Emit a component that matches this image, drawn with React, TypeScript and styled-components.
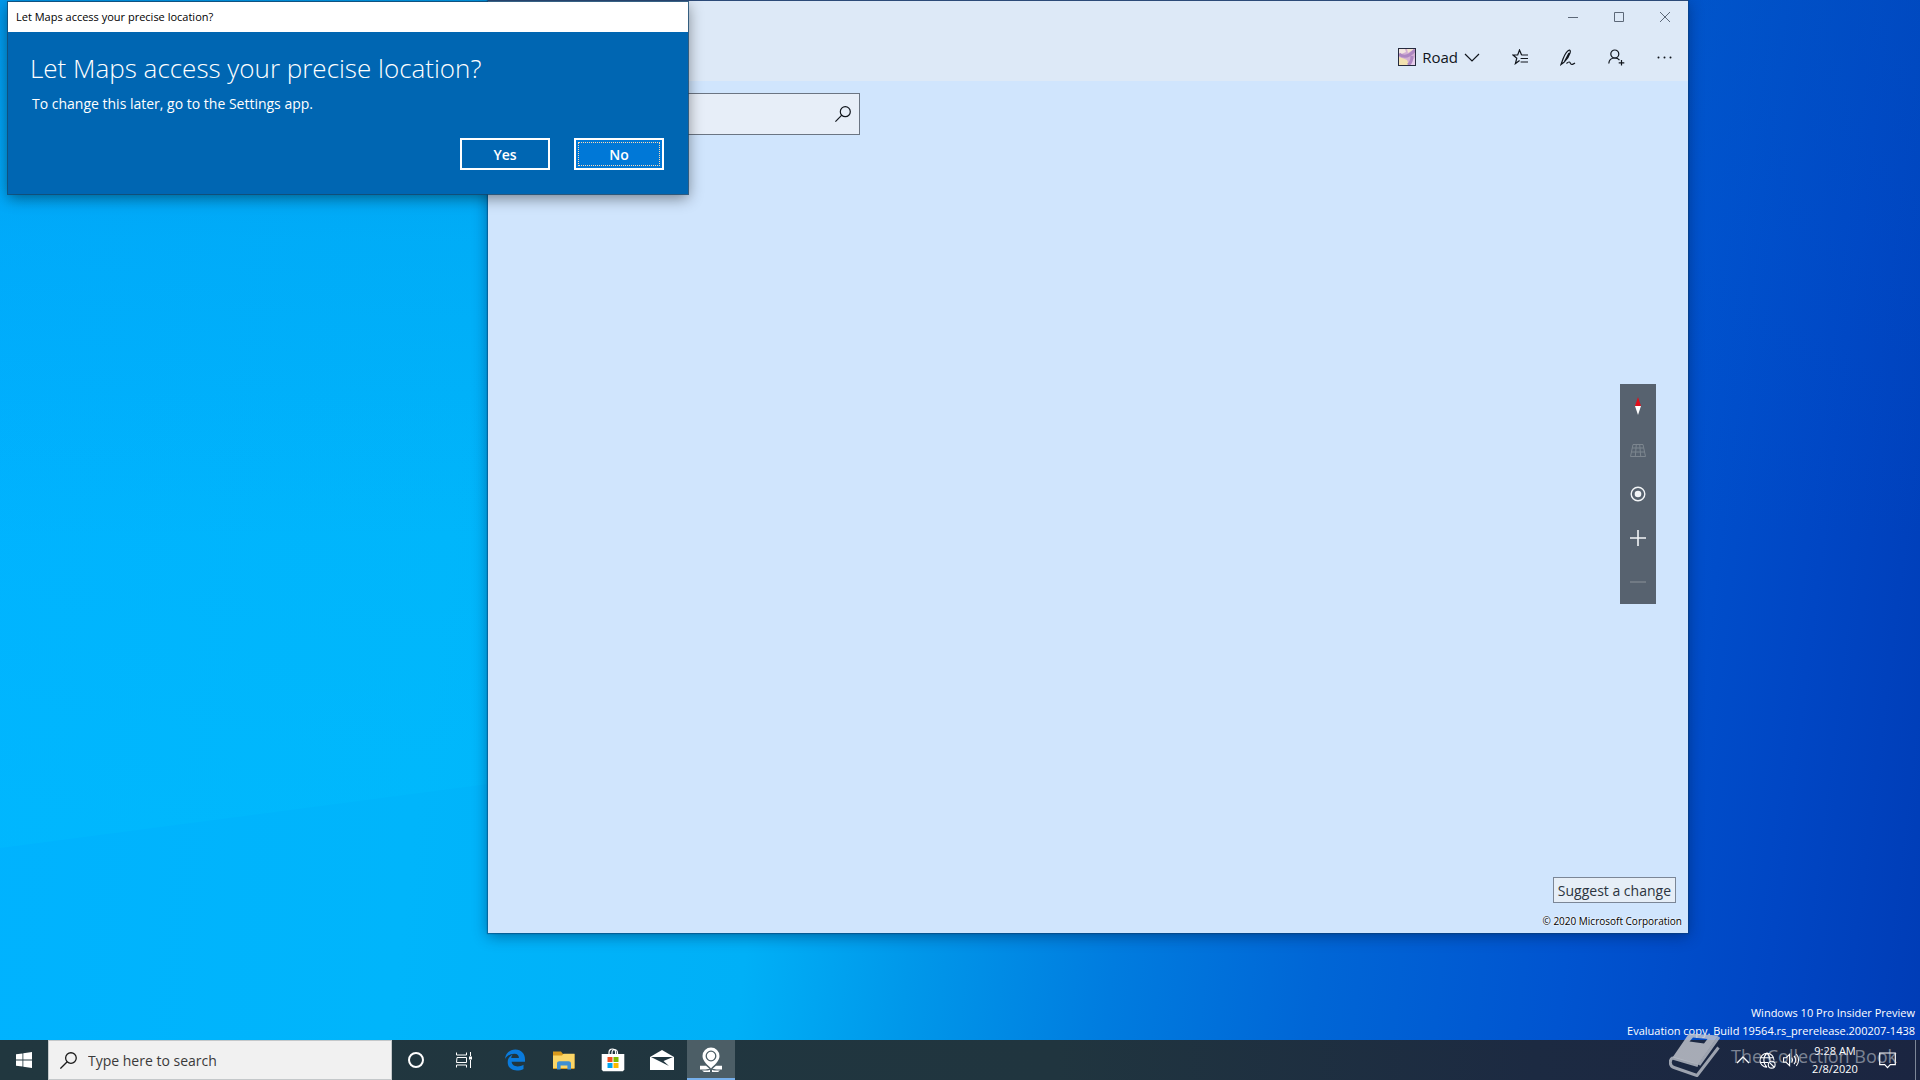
import React from "react";
import styled, { createGlobalStyle } from "styled-components";

const GlobalStyle = createGlobalStyle`
  *, *::before, *::after { box-sizing: border-box; }
  html, body { margin: 0; padding: 0; }
  body { overflow: hidden; }
  body, button, input {
    font-family: "Open Sans", "Noto Sans", sans-serif;
  }
  button { border: 0; padding: 0; background: none; color: inherit; cursor: default; }
  h1, p { margin: 0; font-weight: 400; }
  svg { display: block; flex: none; }
`;

/* ---------- Desktop ---------- */

const Desktop = styled.div`
  position: relative;
  display: flex;
  flex-direction: column;
  min-height: 100vh;
  overflow: hidden;
  background:
    linear-gradient(to bottom, rgba(0, 88, 190, 0.28), rgba(0, 100, 210, 0.1) 22%, rgba(0, 110, 230, 0) 50%),
    linear-gradient(
      97deg,
      #00b2ff 0%,
      #00b5fb 25%,
      #00b0f7 42%,
      #0098ea 50%,
      #007cdf 60%,
      #0066d6 70%,
      #0054d0 82%,
      #0046c4 92%,
      #003cb6 100%
    );
`;

const Beams = styled.svg`
  position: absolute;
  inset: 0;
  width: 100%;
  height: 100%;
`;

const Workspace = styled.main`
  position: relative;
  flex: 1;
  display: flex;
  align-items: flex-end;
  justify-content: flex-end;
`;

const BuildNotice = styled.div`
  padding: 0 5px 0 0;
  color: #fff;
  font-size: 11px;
  line-height: 18px;
  text-align: right;
  white-space: nowrap;
`;

/* ---------- Maps window ---------- */

const MapsWindow = styled.section`
  position: absolute;
  top: 0;
  left: 488px;
  right: 232px;
  bottom: 107px;
  display: flex;
  flex-direction: column;
  border-top: 1px solid #2b4a78;
  background: #d0e5fd;
  box-shadow: 0 0 1px 1px rgba(10, 60, 110, 0.5), 0 3px 14px rgba(0, 20, 60, 0.45);
`;

const MapsHeader = styled.header`
  background: #dde9f7;
`;

const CaptionBar = styled.div`
  display: flex;
  justify-content: flex-end;
  height: 32px;
  color: #5c6878;
`;

const CaptionButton = styled.button`
  display: grid;
  place-items: center;
  width: 46px;
  height: 32px;
`;

const Toolbar = styled.div`
  display: flex;
  justify-content: flex-end;
  height: 48px;
  color: #10151c;
`;

const ToolButton = styled.button`
  display: grid;
  place-items: center;
  width: 48px;
  height: 48px;
`;

const ViewButton = styled.button`
  display: flex;
  align-items: center;
  gap: 6px;
  padding: 0 16px;
  font-size: 15px;
`;

const MapArea = styled.div`
  flex: 1;
  display: flex;
  flex-direction: column;
  justify-content: space-between;
  padding: 12px 12px 4px;
`;

const MapSearch = styled.label`
  display: flex;
  align-items: center;
  width: 360px;
  height: 42px;
  padding: 0 8px;
  border: 1px solid #6b7583;
  background: #e7eef8;
  color: #10151c;
`;

const MapSearchInput = styled.input`
  flex: 1;
  min-width: 0;
  border: 0;
  outline: 0;
  background: transparent;
  font-size: 15px;
`;

const MapControls = styled.div`
  align-self: flex-end;
  display: flex;
  flex-direction: column;
  width: 36px;
  margin: 0 20px 24px 0;
  background: #57626f;
`;

const MapControl = styled.button<{ $dim?: boolean }>`
  display: grid;
  place-items: center;
  height: 44px;
  color: ${(p) => (p.$dim ? "#7d868f" : "#f3f5f7")};
`;

const MapFooter = styled.footer`
  display: flex;
  flex-direction: column;
  align-items: flex-end;
  gap: 10px;
`;

const SuggestButton = styled.button`
  height: 26px;
  padding: 0 4px;
  border: 1px solid #7b8696;
  background: #e6eef7;
  color: #2c3440;
  font-size: 14px;
`;

const Copyright = styled.p`
  margin-right: -6px;
  color: #000;
  font-size: 10px;
  line-height: 16px;
  text-shadow: 0 0 2px #fff, 0 0 2px #fff;
`;

/* ---------- Consent dialog ---------- */

const Dialog = styled.section`
  position: absolute;
  top: 2px;
  left: 8px;
  width: 680px;
  background: #0066b2;
  color: #fff;
  box-shadow: 0 0 0 1px rgba(20, 70, 110, 0.8), 0 4px 14px rgba(0, 0, 0, 0.45);
`;

const DialogCaption = styled.div`
  height: 30px;
  padding: 0 8px;
  background: #fff;
  color: #000;
  font-size: 11px;
  line-height: 30px;
`;

const DialogBody = styled.div`
  padding: 16px 24px 24px 22px;
`;

const DialogTitle = styled.h1`
  font-size: 26px;
  font-weight: 300;
  line-height: 40px;
`;

const DialogText = styled.p`
  padding-left: 2px;
  font-size: 14px;
  line-height: 32px;
`;

const DialogActions = styled.div`
  display: flex;
  justify-content: flex-end;
  gap: 24px;
  padding-top: 18px;
`;

const DialogButton = styled.button<{ $focused?: boolean }>`
  width: 90px;
  height: 32px;
  padding: 2px;
  border: 2px solid #fff;
  background: ${(p) => (p.$focused ? "#0078d7" : "transparent")};
  font-size: 14px;
  font-weight: 600;
`;

const FocusRing = styled.span<{ $on?: boolean }>`
  display: grid;
  place-items: center;
  height: 24px;
  border: 1px dotted ${(p) => (p.$on ? "#ffd9b0" : "transparent")};
`;

/* ---------- Taskbar ---------- */

const Taskbar = styled.nav`
  position: relative;
  display: flex;
  height: 40px;
  background: linear-gradient(to right, #21373f, #20353f 55%, #1c2a42 80%, #1b2541);
  color: #fff;
`;

const StartButton = styled.button`
  display: grid;
  place-items: center;
  width: 48px;
`;

const TaskSearch = styled.label`
  display: flex;
  align-items: center;
  gap: 11px;
  width: 344px;
  padding: 0 11px;
  border: 1px solid #c4c8ca;
  background: #f1f1f1;
  color: #1a1a1a;
`;

const TaskSearchInput = styled.input`
  flex: 1;
  min-width: 0;
  padding: 0;
  border: 0;
  outline: 0;
  background: transparent;
  font-size: 14px;
  &::placeholder { color: #3a3a3a; opacity: 1; }
`;

const TaskGroup = styled.div`
  display: flex;
`;

const AppGroup = styled.div`
  display: flex;
  gap: 1px;
  padding-left: 3px;
`;

const TaskButton = styled.button<{ $active?: boolean }>`
  display: grid;
  place-items: center;
  width: 48px;
  background: ${(p) => (p.$active ? "#4c5e66" : "transparent")};
  box-shadow: ${(p) => (p.$active ? "inset 0 -2px 0 #76b0ec" : "none")};
`;

const Tray = styled.div`
  display: flex;
  align-items: center;
  margin-left: auto;
`;

const TrayButton = styled.button`
  display: grid;
  place-items: center;
  width: 24px;
  height: 40px;
`;

const Clock = styled.button`
  width: 64px;
  height: 40px;
  font-size: 11px;
  line-height: 18px;
  text-align: center;
`;

const ActionCenter = styled.button`
  display: grid;
  place-items: center;
  width: 40px;
  height: 40px;
  margin-right: 8px;
`;

const ShowDesktop = styled.button`
  width: 5px;
  height: 40px;
  border-left: 1px solid #7d8798;
`;

const Watermark = styled.div`
  position: absolute;
  right: 23px;
  bottom: 0;
  display: flex;
  align-items: center;
  gap: 10px;
  height: 48px;
  color: rgba(222, 224, 230, 0.5);
  font-size: 18px;
  white-space: nowrap;
  pointer-events: none;
`;

/* ---------- Icons ---------- */

const line = { fill: "none", stroke: "currentColor" } as const;

const SearchIcon = ({ size }: { size: number }) => (
  <svg width={size} height={size} viewBox="0 0 16 16" {...line} strokeWidth="1.2">
    <circle cx="10.3" cy="5.7" r="5" />
    <path d="M6.8 9.2.4 15.6" />
  </svg>
);

const RoadSwatch = () => (
  <svg width="18" height="18" viewBox="0 0 18 18">
    <rect width="18" height="18" fill="#d3b0d4" />
    <path d="M1 1h6l1 3-7 3z" fill="#f3e6e0" />
    <path d="M1 9c3 1 6 2 8 3l2 5H1z" fill="#f3e2b0" />
    <path d="M17 9v8h-4l1-4z" fill="#e6ccea" />
    <path d="M9 1h7l-6 4z" fill="#f4e3cf" />
    <path d="M1 6c5 4 10 3 16-4M10 17c3-2 4-5 4-9" stroke="#ae87c2" strokeWidth="3" fill="none" />
    <rect x=".5" y=".5" width="17" height="17" fill="none" stroke="#252a3d" />
  </svg>
);

const ChevronDown = () => (
  <svg width="16" height="9" viewBox="0 0 16 9" {...line} strokeWidth="1.2">
    <path d="M1 1l7 7 7-7" />
  </svg>
);

const FavoritesIcon = () => (
  <svg width="17" height="16" viewBox="0 0 17 16" {...line} strokeWidth="1.2">
    <path d="M9.6 6 7.5 1 5.7 6H1l3.8 3.2L3.4 14.6 7.6 11.4M9.6 6H16M8.6 9.5H16M8.6 13H16" />
  </svg>
);

const InkIcon = () => (
  <svg width="16" height="17" viewBox="0 0 16 17" {...line} strokeWidth="1.2">
    <path d="M1 15.5 3 10C4.500 6 7 2 9 1.200c1.500-.4 1.500 1.300 1 2.800C9 7.500 6.500 11 4 13.300zM4.500 12.500 9 4M1 15.500 4 13.300M6.500 14.500c2.500-2.500 3.500-1.500 4 0 1 1.500 2.500 1 4.500-.5" />
  </svg>
);

const AddPersonIcon = () => (
  <svg width="17" height="17" viewBox="0 0 17 17" {...line} strokeWidth="1.2">
    <circle cx="6.800" cy="5" r="4" />
    <path d="M.8 14.500C1 11 3.500 9 6.800 9c2 0 3.700.8 4.700 2.200M13.500 11v5.600M10.700 13.800h5.600" />
  </svg>
);

const MoreIcon = () => (
  <svg width="15" height="3" viewBox="0 0 15 3" fill="currentColor">
    <circle cx="1.500" cy="1.500" r="1" />
    <circle cx="7.500" cy="1.500" r="1" />
    <circle cx="13.500" cy="1.500" r="1" />
  </svg>
);

const CompassIcon = () => (
  <svg width="8" height="18" viewBox="0 0 8 18">
    <path d="M4 0l3 9H1z" fill="#e0101c" />
    <path d="M1 9h6l-3 9z" fill="#fff" />
  </svg>
);

const TiltIcon = () => (
  <svg width="16" height="13" viewBox="0 0 16 13" {...line}>
    <path d="M3 .5h10l2.500 12H.5zM2.200 4h11.600M1.400 8h13.200M6.300.5l-1 12M9.700.5l1 12" />
  </svg>
);

const LocateIcon = () => (
  <svg width="16" height="16" viewBox="0 0 16 16" {...line} strokeWidth="1.400">
    <circle cx="8" cy="8" r="6.800" />
    <circle cx="8" cy="8" r="3.300" fill="currentColor" stroke="none" />
  </svg>
);

const PlusIcon = () => (
  <svg width="16" height="16" viewBox="0 0 16 16" {...line} strokeWidth="1.600">
    <path d="M8 0v16M0 8h16" />
  </svg>
);

const MinusIcon = () => (
  <svg width="16" height="2" viewBox="0 0 16 2" {...line} strokeWidth="1.400">
    <path d="M0 1h16" />
  </svg>
);

const WindowsIcon = () => (
  <svg width="16" height="16" viewBox="0 0 16 16" fill="#fff">
    <path d="M0 2.300 6.500 1.400v6.200H0zM7.300 1.300 16 0v7.600H7.300zM0 8.400h6.500v6.200L0 13.700zM7.300 8.400H16V16l-8.700-1.300z" />
  </svg>
);

const CortanaIcon = () => (
  <svg width="18" height="18" viewBox="0 0 18 18" {...line} strokeWidth="2">
    <circle cx="9" cy="9" r="7" />
  </svg>
);

const TaskViewIcon = () => (
  <svg width="17" height="16" viewBox="0 0 17 16" {...line}>
    <path d="M.5.500v2.500h10V.5M.5 15.500V13h10v2.500M1 5.500h9.500v5H.5zM14.500 0v4M14.500 8v8" />
    <rect x="13" y="4.500" width="3" height="3" fill="currentColor" stroke="none" />
  </svg>
);

const EdgeIcon = () => (
  <svg width="22" height="22" viewBox="0 0 22 22" fill="#0a7bdc">
    <path d="M1 10C1.600 4.400 5.600.5 11.400.5c6 0 9.600 4.500 9.600 9.800v2.500H7.600c.3 3.200 2.900 4.600 6 4.600 2.200 0 4.200-.7 5.900-1.700v4.300c-1.900 1-4.200 1.500-6.600 1.500-5.400 0-9.200-3.200-9.200-8.300 0-3.500 1.900-6.400 5.200-7.800-1.100 1.100-1.500 2.400-1.700 3.600h7.700c0-2.500-1.300-4.300-4.600-4.300C6.500 4.700 3.200 6.700 1 10z" />
  </svg>
);

const FolderIcon = () => (
  <svg width="22" height="19" viewBox="0 0 22 19">
    <path d="M0 .5h8l2 2.500h11.500v15H0z" fill="#d99a1c" />
    <path d="M0 4.500h9l1.500-1.700H21.500V17H0z" fill="#fbd667" />
    <path d="M4 18.500v-6c0-1.400 1-2.300 2.400-2.300h9.200c1.400 0 2.400.9 2.400 2.300v6h-3.600v-4H7.600v4z" fill="#3f8fd2" />
  </svg>
);

const StoreIcon = () => (
  <svg width="24" height="24" viewBox="0 0 24 24">
    <path d="M8 7V4.500C8 2.500 9.400 1 11.300 1s3.300 1.500 3.300 3.500V7M11 6V4.500C11 2.700 12 1.500 13.500 1.500S16.500 3 16.500 4.800V7" fill="none" stroke="#fff" strokeWidth="1.200" />
    <path d="M.7 6h22.600v15.500L22 23.300H2L.7 21.500z" fill="#fff" />
    <path d="M6.500 9h5v5h-5z" fill="#f25022" />
    <path d="M12.500 9h5v5h-5z" fill="#7fba00" />
    <path d="M6.500 15h5v5h-5z" fill="#00a4ef" />
    <path d="M12.500 15h5v5h-5z" fill="#ffb900" />
  </svg>
);

const MailIcon = () => (
  <svg width="24" height="20" viewBox="0 0 24 20">
    <path d="M0 7 12 0l12 7v13H0z" fill="#fff" />
    <path d="M1 7h22L13.500 11l5.500 5z" fill="#20353f" />
  </svg>
);

const MapsIcon = () => (
  <svg width="24" height="26" viewBox="0 0 24 26">
    <path d="M12 21.500C9.500 18.500 3.500 14.500 3.500 9a8.500 8.500 0 0 1 17 0c0 5.500-6 9.500-8.500 12.500z" fill="#fff" />
    <circle cx="12" cy="9" r="4.800" fill="none" stroke="#4c5e66" strokeWidth="1.300" />
    <path d="M1 18.800h6l3.500 3-4 .7H1zM23 18.800h-6l-3.500 3 4 .7H23zM3 23.500h6l2-.8V25H5zM21 23.500h-6l-2-.8V25h6z" fill="#fff" />
  </svg>
);

const TrayChevron = () => (
  <svg width="14" height="8" viewBox="0 0 14 8" {...line} strokeWidth="1.400">
    <path d="M1 7l6-6 6 6" />
  </svg>
);

const OfflineGlobe = () => (
  <svg width="17" height="17" viewBox="0 0 17 17" {...line} strokeWidth="1.100">
    <path d="M15 8.500A7 7 0 1 0 8 15.300M1 5.700h13.400M1 10.500h8M8 1C3.800 5 3.800 11 8 15.300M8 1c2 2 3 4.500 3 7.500" />
    <circle cx="12.700" cy="12.700" r="3.400" />
    <path d="M10.400 10.400l4.600 4.600" />
  </svg>
);

const VolumeIcon = () => (
  <svg width="17" height="14" viewBox="0 0 17 14" {...line} strokeWidth="1.100">
    <path d="M.6 4.700h2.600L6.600 1.400v11.200L3.200 9.300H.6zM8.800 4.600c1 1.500 1 3.300 0 4.800M11 2.800c2 2.500 2 5.900 0 8.400M13.300 1c3 3.500 3 8.500 0 12" />
  </svg>
);

const NoticeIcon = () => (
  <svg width="17" height="17" viewBox="0 0 17 17" {...line} strokeWidth="1.200">
    <path d="M.7 1h15.600v11.700h-5L8.500 15.700l-2.800-3h-5z" />
  </svg>
);

const BookIcon = () => (
  <svg width="52" height="46" viewBox="0 0 52 46">
    <path
      fillRule="evenodd"
      d="M20 .5 49.500 2.500 29 31.500 3.500 24.500zM24 4.500 20.500 8.500 35 10.500 38.500 6z"
      fill="#c6c8cf"
      fillOpacity=".82"
    />
    <path
      d="M4 24.500C0 27 .5 33 5 34.500L28 42.500 49.500 14.500M3.500 25 29 32.500M30 32 50 4"
      fill="none"
      stroke="#b4b8c2"
      strokeOpacity=".85"
      strokeWidth="3"
      strokeLinejoin="round"
    />
  </svg>
);

/* ---------- Composition ---------- */

const APPS = [
  { name: "Microsoft Edge", icon: <EdgeIcon /> },
  { name: "File Explorer", icon: <FolderIcon /> },
  { name: "Microsoft Store", icon: <StoreIcon /> },
  { name: "Mail", icon: <MailIcon /> },
  { name: "Maps", icon: <MapsIcon />, active: true },
];

const CONTROLS = [
  { name: "Rotate", icon: <CompassIcon /> },
  { name: "Tilt", icon: <TiltIcon />, dim: true },
  { name: "Show my location", icon: <LocateIcon /> },
  { name: "Zoom in", icon: <PlusIcon /> },
  { name: "Zoom out", icon: <MinusIcon />, dim: true },
];

export default function App() {
  return (
    <Desktop>
      <GlobalStyle />
      <Beams viewBox="0 0 1920 1080" preserveAspectRatio="none" aria-hidden="true">
        <defs>
          <linearGradient id="beam" x1="0" y1="0" x2="0" y2="1">
            <stop offset="0" stopColor="#00c0ff" stopOpacity="0" />
            <stop offset="1" stopColor="#00c4ff" stopOpacity=".25" />
          </linearGradient>
        </defs>
        <path d="M0 400 488 380 V784 L0 848z" fill="url(#beam)" />
      </Beams>

      <Workspace>
        <MapsWindow aria-label="Maps">
          <MapsHeader>
            <CaptionBar>
              <CaptionButton aria-label="Minimize">
                <svg width="10" height="10" {...line}><path d="M0 5.500h10" /></svg>
              </CaptionButton>
              <CaptionButton aria-label="Maximize">
                <svg width="10" height="10" {...line}><path d="M.5.500h9v9h-9z" /></svg>
              </CaptionButton>
              <CaptionButton aria-label="Close">
                <svg width="10" height="10" {...line}><path d="M0 0l10 10M10 0 0 10" /></svg>
              </CaptionButton>
            </CaptionBar>
            <Toolbar>
              <ViewButton>
                <RoadSwatch />
                Road
                <ChevronDown />
              </ViewButton>
              <ToolButton aria-label="Saved places"><FavoritesIcon /></ToolButton>
              <ToolButton aria-label="Windows Ink"><InkIcon /></ToolButton>
              <ToolButton aria-label="Sign in"><AddPersonIcon /></ToolButton>
              <ToolButton aria-label="See more"><MoreIcon /></ToolButton>
            </Toolbar>
          </MapsHeader>
          <MapArea>
            <MapSearch>
              <MapSearchInput type="text" aria-label="Search maps" />
              <SearchIcon size={16} />
            </MapSearch>
            <MapControls>
              {CONTROLS.map((c) => (
                <MapControl key={c.name} aria-label={c.name} $dim={c.dim}>
                  {c.icon}
                </MapControl>
              ))}
            </MapControls>
            <MapFooter>
              <SuggestButton>Suggest a change</SuggestButton>
              <Copyright>© 2020 Microsoft Corporation</Copyright>
            </MapFooter>
          </MapArea>
        </MapsWindow>

        <Dialog role="dialog" aria-labelledby="consent-title">
          <DialogCaption>Let Maps access your precise location?</DialogCaption>
          <DialogBody>
            <DialogTitle id="consent-title">Let Maps access your precise location?</DialogTitle>
            <DialogText>To change this later, go to the Settings app.</DialogText>
            <DialogActions>
              <DialogButton><FocusRing>Yes</FocusRing></DialogButton>
              <DialogButton $focused><FocusRing $on>No</FocusRing></DialogButton>
            </DialogActions>
          </DialogBody>
        </Dialog>

        <BuildNotice>
          <p>Windows 10 Pro Insider Preview</p>
          <p>Evaluation copy. Build 19564.rs_prerelease.200207-1438</p>
        </BuildNotice>
      </Workspace>

      <Taskbar>
        <StartButton aria-label="Start"><WindowsIcon /></StartButton>
        <TaskSearch>
          <SearchIcon size={17} />
          <TaskSearchInput type="text" placeholder="Type here to search" aria-label="Type here to search" />
        </TaskSearch>
        <TaskGroup>
          <TaskButton aria-label="Cortana"><CortanaIcon /></TaskButton>
          <TaskButton aria-label="Task View"><TaskViewIcon /></TaskButton>
        </TaskGroup>
        <AppGroup>
          {APPS.map((a) => (
            <TaskButton key={a.name} aria-label={a.name} $active={a.active}>
              {a.icon}
            </TaskButton>
          ))}
        </AppGroup>
        <Tray>
          <TrayButton aria-label="Show hidden icons"><TrayChevron /></TrayButton>
          <TrayButton aria-label="Network"><OfflineGlobe /></TrayButton>
          <TrayButton aria-label="Volume"><VolumeIcon /></TrayButton>
          <Clock>
            9:28 AM
            <br />
            2/8/2020
          </Clock>
          <ActionCenter aria-label="Notifications"><NoticeIcon /></ActionCenter>
          <ShowDesktop aria-label="Show desktop" />
        </Tray>
        <Watermark>
          <BookIcon />
          The Collection Book
        </Watermark>
      </Taskbar>
    </Desktop>
  );
}
